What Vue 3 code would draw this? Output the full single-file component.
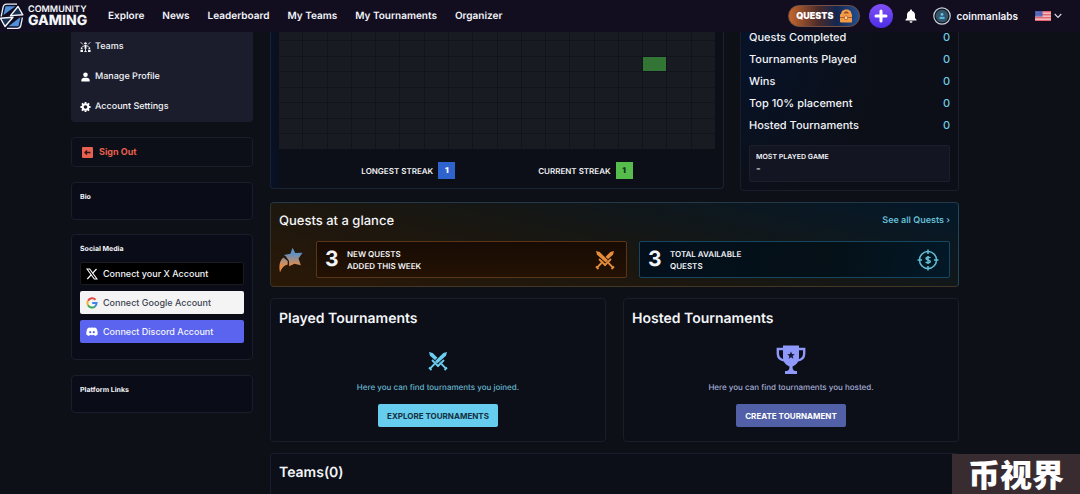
<script setup>
const nav = ['Explore', 'News', 'Leaderboard', 'My Teams', 'My Tournaments', 'Organizer']
const stats = ['Quests Completed', 'Tournaments Played', 'Wins', 'Top 10% placement', 'Hosted Tournaments']
const COLUMNS = 18
const ROWS = 8
const activeCell = 2 * COLUMNS + 15
const stripes = [0, 1, 2, 3, 4, 5, 6]
</script>

<template>
  <div class="page">
    <header class="topbar">
      <a class="brand" href="#" aria-label="Community Gaming">
        <svg class="brand-mark" viewBox="0 0 24 28" aria-hidden="true">
          <path d="M1.200 14.500 3 5.500Q3.600 2.200 6.600 2.200H17M22.400 15.500 20.800 23.500Q20.200 26.300 17.200 26.300H7" fill="none" stroke="#e9f0fb" stroke-width="1.300" />
          <path d="M5.500 4.300h10L3.500 13zM18.500 24.300H8.500L20.500 15z" fill="#4f90dc" />
          <path d="M18 4.500 22.800 12.800 10.500 13.600zM5 24.500 .5 16.300 13 15.300z" fill="#172e50" stroke="#f4f7ff" stroke-width="1.400" stroke-linejoin="round" />
        </svg>
        <span class="brand-words"><span class="brand-top">COMMUNITY</span><span class="brand-bottom">GAMING</span></span>
      </a>
      <nav class="nav">
        <a v-for="item in nav" :key="item" href="#">{{ item }}</a>
      </nav>
      <div class="tools">
        <button class="quests" type="button">
          QUESTS
          <svg viewBox="0 0 14 14" aria-hidden="true">
            <path d="M1.500 6 3 2l3-1.500h3L11.500 2 13 6z" fill="#f5a04c" />
            <path d="M4.500 4.500 6 2.500h2.500L10 4.500z" fill="#984e28" />
            <rect x="1" y="5" width="12" height="8.500" rx="1" fill="#f49b43" />
            <path d="M1 8.500h4M9 8.500h4" stroke="#a75a2a" />
            <rect x="5.500" y="7" width="3" height="3.500" rx=".5" fill="#ffd092" stroke="#a75a2a" stroke-width=".7" />
          </svg>
        </button>
        <button class="add" type="button" aria-label="Create">
          <svg viewBox="0 0 24 24" aria-hidden="true"><path d="M12 7v10M7 12h10" stroke="#fff" stroke-width="3" stroke-linecap="round" /></svg>
        </button>
        <button class="bell" type="button" aria-label="Notifications">
          <svg viewBox="0 0 12 14" aria-hidden="true"><path d="M6 .5c.6 0 1 .4 1 1v.4c1.900.5 3 2 3 4V9l1.500 1.800v.7H.5v-.7L2 9V5.900c0-2 1.100-3.500 3-4v-.4c0-.6.4-1 1-1zM4.500 12.300h3a1.500 1.500 0 0 1-3 0z" fill="#fff" /></svg>
        </button>
        <button class="user" type="button">
          <svg viewBox="0 0 18 18" aria-hidden="true">
            <circle cx="9" cy="9" r="8.200" fill="#101722" stroke="#c9d2dc" stroke-width="1.200" />
            <circle cx="9" cy="9" r="6.300" fill="#35566b" />
            <circle cx="9" cy="7.400" r="1.400" fill="#6ac7ec" />
            <path d="M6.500 12V9.800h5V12z" fill="#57b4dc" />
          </svg>
          coinmanlabs
        </button>
        <button class="lang" type="button" aria-label="Language: English">
          <svg class="flag" viewBox="0 0 16 10" aria-hidden="true">
            <rect width="16" height="10" fill="#f7eeee" />
            <rect v-for="n in stripes" :key="n" :y="n * 1.5" width="16" height="0.8" fill="#e0414f" />
            <rect width="7.500" height="5.500" fill="#4858ae" />
            <path d="M1 1.500h6M1 3h6M1 4.500h6" stroke="#a9b4e6" stroke-width=".5" stroke-dasharray=".6 .6" />
          </svg>
          <svg class="chevron" viewBox="0 0 8 6" aria-hidden="true"><path d="m.7 1 3.300 3.500L7.300 1" fill="none" stroke="#d8d8e2" stroke-width="1.100" /></svg>
        </button>
      </div>
    </header>

    <div class="content">
      <aside class="sidebar">
        <nav class="menu">
          <a href="#">
            <svg viewBox="0 0 12 12" aria-hidden="true">
              <g fill="#fff"><circle cx="6" cy="2" r="1.300" /><path d="M5 4h2v4H5z" /><circle cx="1.800" cy="7.300" r="1" /><circle cx="10.200" cy="7.300" r="1" /><path d="M.5 9h2.700v2.500H.5zM8.800 9h2.700v2.500H8.800z" /></g>
              <path d="M.7.700l2.500 2.500M11.300.700 8.800 3.200M4.500 11h3M6 8v3M2.500 5.500 6 4.300l3.500 1.200" fill="none" stroke="#fff" stroke-width=".9" />
            </svg>
            Teams
          </a>
          <a href="#">
            <svg viewBox="0 0 12 12" aria-hidden="true"><circle cx="6" cy="3.500" r="2.500" fill="#fff" /><path d="M1.500 11V9.500c0-1.700 1.300-2.700 3-2.700h3c1.700 0 3 1 3 2.700V11z" fill="#fff" /></svg>
            Manage Profile
          </a>
          <a href="#">
            <svg viewBox="0 0 12 12" aria-hidden="true"><circle cx="6" cy="6" r="3.100" fill="none" stroke="#fff" stroke-width="2.200" /><path d="M6 .5v2M6 9.500v2M.5 6h2M9.500 6h2M2.100 2.100l1.500 1.500M8.400 8.400l1.500 1.500M9.900 2.100 8.400 3.600M3.600 8.400 2.100 9.900" stroke="#fff" stroke-width="2" /></svg>
            Account Settings
          </a>
        </nav>
        <button class="card signout" type="button">
          <svg viewBox="0 0 11 11" aria-hidden="true"><rect width="11" height="11" rx="1" fill="#e8604f" /><path d="M8.500 5.500h-5M5 3.500l-2 2 2 2" fill="none" stroke="#311519" stroke-width="1.300" /></svg>
          Sign Out
        </button>
        <section class="card note"><h2>Bio</h2></section>
        <section class="card social">
          <h2>Social Media</h2>
          <button class="connect x" type="button">
            <svg viewBox="0 0 12 12" aria-hidden="true"><path d="M1 1h2.700L11 11H8.300z" fill="none" stroke="#fff" stroke-width="1.100" /><path d="m10.500 1-4 4.300M5.300 6.700 1.300 11" stroke="#fff" stroke-width="1.200" /></svg>
            Connect your X Account
          </button>
          <button class="connect google" type="button">
            <svg viewBox="0 0 12 12" aria-hidden="true">
              <g fill="none" stroke-width="2"><path d="M9.500 2.700A4.600 4.600 0 0 0 2 3.900" stroke="#e34a42" /><path d="M2 3.800a4.600 4.600 0 0 0 0 4.400" stroke="#edb52c" /><path d="M2 8.200a4.600 4.600 0 0 0 7 1.200" stroke="#3aa757" /><path d="M9 9.400A4.600 4.600 0 0 0 10.600 6H6.200" stroke="#4285e8" /></g>
            </svg>
            Connect Google Account
          </button>
          <button class="connect discord" type="button">
            <svg viewBox="0 0 12 12" aria-hidden="true"><path d="M4.100 1.800 3.800 1.500C2.900 1.700 2 2 1.700 2.300.7 4 .2 6 .3 8.500c1 .9 2 1.300 2.900 1.500l.7-1.200a6 6 0 0 0 4.200 0L8.800 10c.9-.2 1.900-.6 2.900-1.500.1-2.500-.4-4.500-1.400-6.200-.3-.3-1.200-.6-2.100-.8l-.3.300a8 8 0 0 0-3.800 0z" fill="#fff" /><circle cx="4.200" cy="6.200" r="1.100" fill="#5865f2" /><circle cx="7.800" cy="6.200" r="1.100" fill="#5865f2" /></svg>
            Connect Discord Account
          </button>
        </section>
        <section class="card note"><h2>Platform Links</h2></section>
      </aside>

      <main class="main">
        <div class="overview">
          <section class="card activity">
            <div class="cells">
              <span v-for="n in COLUMNS * ROWS" :key="n" :class="{ active: n - 1 === activeCell }"></span>
            </div>
            <div class="streaks">
              <div>LONGEST STREAK <b class="blue">1</b></div>
              <div>CURRENT STREAK <b class="green">1</b></div>
            </div>
          </section>
          <section class="card stats">
            <dl>
              <div v-for="item in stats" :key="item"><dt>{{ item }}</dt><dd>0</dd></div>
            </dl>
            <div class="most"><h3>MOST PLAYED GAME</h3><p>-</p></div>
          </section>
        </div>

        <section class="glance">
          <div class="glance-head">
            <h2>Quests at a glance</h2>
            <a href="#">See all Quests ›</a>
          </div>
          <div class="glance-row">
            <svg class="comet" viewBox="0 0 24 26" aria-hidden="true">
              <defs><linearGradient id="cometFill" x1="0" y1="0" x2="0" y2="1" gradientUnits="userSpaceOnUse" gradientTransform="scale(1 26)"><stop offset=".25" stop-color="#5d91c4" /><stop offset=".68" stop-color="#d98d54" /><stop offset="1" stop-color="#ef8425" /></linearGradient></defs>
              <g fill="url(#cometFill)"><path d="M13.500.8 16.300 6l7.200-.2-4 5.700 2.300 6.800-6.300-1.600-5.300 2.500-.2-5.200L7 9.500 5 8l6.400-1.200z" /><path d="M4.300 10.500 8.700 14v3.500C4.900 18.700 2.700 21 1 25.500-.3 19.500.3 14 4.300 10.500z" /></g>
            </svg>
            <div class="quest orange">
              <strong>3</strong><span>NEW QUESTS<br />ADDED THIS WEEK</span>
              <svg class="swords" viewBox="0 0 22 22" aria-hidden="true">
                <g transform="matrix(-1 0 0 1 22 0)"><path class="blade" d="M2 2l3.700 1 8.300 8.300-2.200 2.200L3 5.700z" /><path class="hilt" d="M10.500 16.500 17 10M14.500 14l4.300 4.300M17.500 20l2.500-2.500" /></g>
                <path class="gap" d="M2 2l3.700 1 8.300 8.300-2.200 2.200L3 5.700z" />
                <path class="blade" d="M2 2l3.700 1 8.300 8.300-2.200 2.200L3 5.700z" /><path class="hilt" d="M10.500 16.500 17 10M14.500 14l4.300 4.300M17.500 20l2.500-2.500" />
              </svg>
            </div>
            <div class="quest cyan">
              <strong>3</strong><span>TOTAL AVAILABLE<br />QUESTS</span>
              <svg viewBox="0 0 22 22" aria-hidden="true">
                <g fill="none" stroke="#62bdd5" stroke-width="1.500"><circle cx="11" cy="11" r="8.500" /><path d="M11 .5v4.500M11 17v4.500M.5 11H5M17 11h4.500M13.300 9c-.5-1.100-4.300-1.300-4.300.5s4.300 1 4.300 2.900c0 1.800-3.900 1.600-4.600.4M11 7v8" /></g>
              </svg>
            </div>
          </div>
        </section>

        <div class="pair">
          <section class="card tournaments">
            <h2>Played Tournaments</h2>
            <div class="empty played">
              <svg class="swords" viewBox="0 0 22 22" aria-hidden="true">
                <path class="blade" d="M2 1l3.700 1 8.300 8.300-2.200 2.200L3 4.700z" /><path class="hilt" d="M10.500 15.500 17 9M14.500 13l4.300 4.300M17.500 19l2.500-2.500" />
                <g transform="matrix(-1 0 0 1 22 0)"><path class="gap" d="M2 1l3.700 1 8.300 8.300-2.200 2.200L3 4.700z" /><path class="blade" d="M2 1l3.700 1 8.300 8.300-2.200 2.200L3 4.700z" /><path class="hilt" d="M10.500 15.500 17 9M14.500 13l4.300 4.300M17.500 19l2.500-2.500" /></g>
              </svg>
              <p>Here you can find tournaments you joined.</p>
              <button type="button">EXPLORE TOURNAMENTS</button>
            </div>
          </section>
          <section class="card tournaments">
            <h2>Hosted Tournaments</h2>
            <div class="empty hosted">
              <svg viewBox="0 0 30 30" aria-hidden="true">
                <path d="M7 4H1.800v4.500c0 4 2.500 6.500 7 7M23 4h5.200v4.500c0 4-2.500 6.500-7 7" fill="none" stroke="#8f98fb" stroke-width="2.400" />
                <path d="M7 .5h16V12c0 5-2.500 7.500-6.500 9.500 0 3 1 4 2.500 4.500h2v3H9v-3h2c1.500-.5 2.500-1.500 2.500-4.500C9.500 19.500 7 17 7 12z" fill="#8f98fb" />
                <path d="m15 6.500 1.100 2.600 2.700.2-2.100 1.800.7 2.700-2.400-1.500-2.400 1.500.7-2.700-2.100-1.800 2.700-.2z" fill="#171a35" />
              </svg>
              <p>Here you can find tournaments you hosted.</p>
              <button type="button">CREATE TOURNAMENT</button>
            </div>
          </section>
        </div>

        <section class="card teams"><h2>Teams(0)</h2></section>
      </main>
    </div>
    <div class="stamp" lang="zh">币视界</div>
  </div>
</template>

<style>
body { margin: 0; background: #0d1017; }
</style>

<style scoped>
* { box-sizing: border-box; }
.page {
  position: relative;
  display: flex;
  flex-direction: column;
  min-height: 100vh;
  overflow: hidden;
  background: #0d1017;
  color: #f3f4f8;
  font: 500 9px/12px Inter, "Liberation Sans", sans-serif;
  text-rendering: geometricPrecision;
}
h2, h3, p, dl, dd { margin: 0; }
a { color: inherit; text-decoration: none; }
button { padding: 0; border: 0; background: none; color: inherit; font: inherit; cursor: pointer; }
svg { display: block; flex: none; }

.topbar { display: flex; align-items: center; height: 32px; padding-right: 18px; background: #120e20; }
.brand { display: flex; align-items: center; gap: 4px; width: 108px; }
.brand-mark { width: 24px; height: 28px; }
.brand-words { display: flex; flex-direction: column; font-weight: 600; }
.brand-top { font-size: 9px; line-height: 10px; }
.brand-bottom { font-size: 14px; line-height: 12px; font-weight: 800; }
.nav { display: flex; gap: 18px; font-size: 10px; font-weight: 600; }
.tools { display: flex; align-items: center; margin-left: auto; }
.quests {
  display: flex; align-items: center; justify-content: center; gap: 5px;
  width: 72px; height: 22px; border: 1px solid #735045; border-radius: 11px;
  background: linear-gradient(90deg, #c7672c, #4b2b2a 42%, #142650 68%, #234f91);
  color: #fff; font-weight: 900;
}
.quests svg { width: 14px; height: 14px; }
.add { width: 24px; height: 24px; margin-left: 9px; border-radius: 50%; background: linear-gradient(#8150f5, #4b2ee6); }
.add svg { width: 24px; height: 24px; }
.bell { margin-left: 12px; }
.bell svg { width: 12px; height: 14px; }
.user { display: flex; align-items: center; gap: 5px; margin-left: 16px; font-size: 10px; font-weight: 600; }
.user svg { width: 18px; height: 18px; }
.lang { display: flex; align-items: center; gap: 3px; margin-left: 17px; }
.flag { width: 16px; height: 10px; }
.chevron { width: 8px; height: 6px; }

.content { display: grid; flex: 1; grid-template-columns: 182px minmax(0, 1fr); gap: 17px; padding: 0 121px 0 71px; }
.card { border: 1px solid #191d2c; border-radius: 4px; background: #0c0f17; }
.sidebar { display: flex; flex-direction: column; }
.menu { display: flex; flex-direction: column; gap: 18px; padding: 9px; border-radius: 0 0 4px 4px; background: #1b1d2c; }
.menu a { display: flex; align-items: center; gap: 4px; }
.menu svg { width: 11px; height: 12px; }
.signout { display: flex; align-items: center; gap: 6px; height: 30px; margin-top: 15px; padding: 0 10px; color: #e8604f; font-weight: 700; }
.signout svg { width: 11px; height: 11px; }
.note { min-height: 38px; margin-top: 15px; padding: 8px; background: #0a0c18; }
.sidebar h2 { font-size: 7px; line-height: 12px; font-weight: 700; }
.social { display: flex; flex-direction: column; gap: 6px; margin-top: 14px; padding: 8px 8px 16px; background: #0a0c18; }
.connect { display: flex; align-items: center; gap: 5px; height: 23px; padding: 0 6px; border-radius: 2px; text-align: left; }
.connect svg { width: 12px; height: 12px; }
.social h2 { margin-bottom: 1px; }
.x { border: 1px solid #191b20; padding: 0 5px; background: #000; }
.google { background: #f4f4f4; color: #3c4450; }
.discord { background: #5b64ee; }

.main { display: flex; flex-direction: column; min-width: 0; }
.overview { display: grid; grid-template-columns: 454fr 219fr; gap: 16px; align-items: start; }
.activity { height: 157px; padding: 0 8px 8px; border-top: 0; border-radius: 0 0 4px 4px; border-color: #182434; background: linear-gradient(90deg, #071127, #0c0f17 12px); }
.cells {
  display: grid; grid-template-columns: repeat(18, 1fr); grid-template-rows: 8px repeat(7, 1fr);
  gap: 1px; height: 117px; background: #11151b;
}
.cells span { background: #181c22; }
.cells .active { background: #327535; }
.streaks { display: flex; justify-content: center; gap: 83px; margin-top: 13px; font-size: 8px; font-weight: 600; }
.streaks div { display: flex; align-items: center; gap: 5px; }
.streaks b { width: 17px; height: 17px; font-size: 8px; line-height: 17px; text-align: center; }
.blue { background: #2e63ce; }
.green { background: #56bd4c; color: #14351a; }
.stats { padding: 0 8px 8px; border-top: 0; border-radius: 0 0 4px 4px; background: radial-gradient(circle at 0 20%, #071329, #0c0f17 55%); }
.stats dl { margin-top: -3px; font-size: 11px; line-height: 16px; }
.stats dl div { display: flex; justify-content: space-between; margin-bottom: 6px; }
.stats dd { color: #70cbe4; }
.most { height: 37px; margin-top: 12px; padding: 5px 6px; border: 1px solid #1c1e2c; border-radius: 2px; background: #141522; }
.most h3 { font-size: 7px; line-height: 12px; font-weight: 600; }
.most p { font-size: 10px; line-height: 12px; }

.glance {
  margin-top: 11px; padding: 9px 8px 8px; border: 1px solid; border-color: #243847 #234655 #443624 #32312c; border-radius: 4px;
  background: linear-gradient(12deg, #2b1806, #191711 45%, #03182a);
}
.glance-head { display: flex; align-items: center; justify-content: space-between; }
.glance-head h2 { font-size: 13px; line-height: 18px; font-weight: 500; }
.glance-head a { color: #66bdd4; font-weight: 600; }
.glance-row { display: grid; grid-template-columns: 25px 1fr 1fr; gap: 12px; align-items: center; margin-top: 11px; }
.comet { width: 24px; height: 26px; }
.quest { display: flex; align-items: center; height: 37px; padding: 0 10px 0 8px; border: 1px solid #5b3517; border-radius: 2px; font-size: 8px; font-weight: 600; }
.quest strong { width: 22px; font-size: 21px; line-height: 24px; font-weight: 700; }
.quest svg { width: 22px; height: 22px; margin-left: auto; }
.orange { background: linear-gradient(#170b04, #241203); }
.cyan { border-color: #174760; background: linear-gradient(100deg, #03101c, #051017 60%, #031827); }
.swords { color: #e58d3b; }
.blade { fill: currentColor; }
.hilt { fill: none; stroke: currentColor; stroke-width: 1.8; }
.gap { fill: none; stroke: #1d0f04; stroke-width: 1.6; }

.pair { display: grid; grid-template-columns: 1fr 1fr; gap: 17px; margin-top: 11px; }
.tournaments { padding: 10px 8px 14px; }
.tournaments h2, .teams h2 { font-size: 14px; line-height: 20px; font-weight: 600; }
.empty { display: flex; flex-direction: column; align-items: center; font-size: 8px; }
.empty svg { width: 30px; height: 30px; margin-top: 16px; }
.played svg { width: 22px; height: 22px; margin: 22px 0 2px; }
.played .swords { color: #6bcdf0; }
.played .gap { stroke: #0c0f17; }
.empty p { margin-top: 6px; }
.empty button { height: 23px; margin-top: 11px; padding: 0 9px; border-radius: 2px; font-weight: 700; }
.played p { color: #66b5cd; }
.hosted p { color: #a3abd6; }
.played button { background: #67cdee; color: #12303f; }
.hosted button { background: #5260a7; color: #fff; }
.teams { flex: 1; margin-top: 11px; padding: 9px 8px 0; border-bottom: 0; border-radius: 4px 4px 0 0; }
.stamp {
  position: absolute; right: 0; bottom: 0; padding: 0 16px;
  background: #382c31; color: #fff; font: 900 32px/40px "Noto Sans CJK SC", sans-serif;
}
</style>
